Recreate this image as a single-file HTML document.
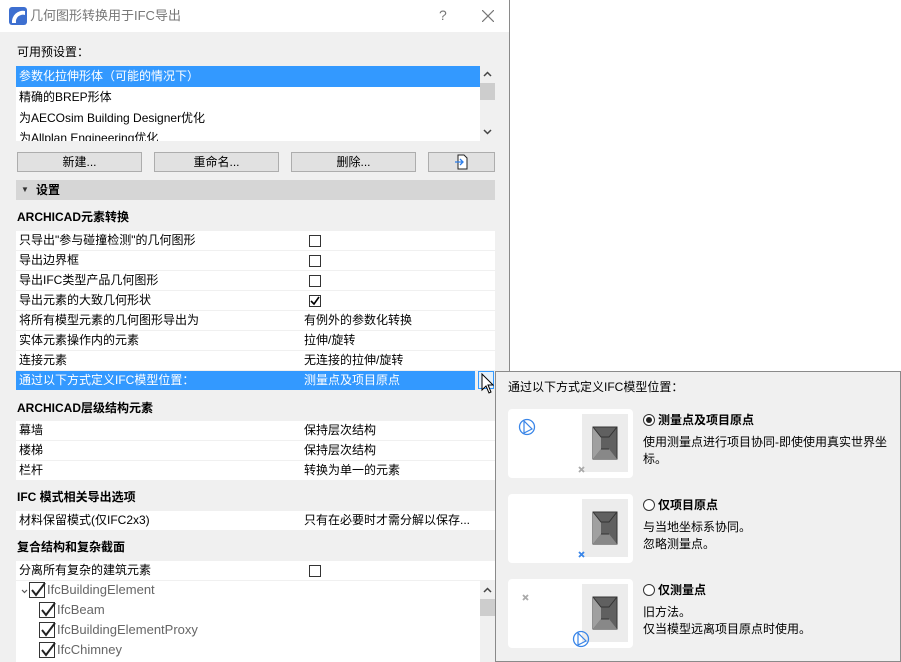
<!DOCTYPE html>
<html><head><meta charset="utf-8"><style>
*{margin:0;padding:0;box-sizing:border-box}
body{width:901px;height:662px;background:#fff;position:relative;overflow:hidden;font-family:"Liberation Sans","Noto Sans CJK SC",sans-serif;font-size:12px;color:#000}
.a{position:absolute;white-space:nowrap;line-height:20px}
.dlg{position:absolute;left:0;top:0;width:510px;height:662px;background:#f0f0f0;border-right:1px solid #8a8a8a}
.tb{position:absolute;left:0;top:0;width:509px;height:32px;background:#fff}
.btn{position:absolute;top:152px;height:20px;background:#e1e1e1;border:1px solid #adadad;text-align:center;line-height:18px}
.row{position:absolute;left:16px;width:479px;height:19px;background:#fff}
.row span{position:absolute;top:0;line-height:19px}
.cb{position:absolute;left:293px;top:4px;width:12px;height:12px;border:1px solid #333;background:#fff}
.h{font-weight:bold}
.card{position:absolute;left:508px;width:125px;height:69px;background:#fff;border-radius:4px}
.card .g{position:absolute;left:74px;top:5px;width:46px;height:58px;background:#ececec}
.rad{display:inline-block;width:12px;height:12px;border:1px solid #333;border-radius:50%;vertical-align:-2px;margin-right:3px;position:relative;background:#fff}
.tcb{position:absolute;width:16px;height:16px;border:1px solid #333;background:#fff}
</style></head><body>
<div class="dlg">
<div class="tb">
<svg style="position:absolute;left:9px;top:7px" width="18" height="18"><rect x="0" y="0" width="18" height="18" rx="3" fill="#3d6fd0"/><path d="M3 16 A11 11 0 0 1 16 4 L16 8 A7 7 0 0 0 7 16 Z" fill="#fff"/></svg>
<div class="a" style="left:30px;top:6px;color:#777;font-size:13px">几何图形转换用于IFC导出</div>
<div class="a" style="left:439px;top:5px;color:#777;font-size:14px">?</div>
<svg style="position:absolute;left:482px;top:10px" width="12" height="12"><path d="M0 0L12 12M12 0L0 12" stroke="#777" stroke-width="1.2"/></svg>
</div>
<div class="a" style="left:17px;top:42px">可用预设置：</div>
<div style="position:absolute;left:16px;top:66px;width:479px;height:75px;background:#fff;overflow:hidden">
<div style="position:absolute;left:0;top:0;width:464px;height:21px;background:#3399ff"></div>
<div class="a" style="left:3px;top:0;color:#fff">参数化拉伸形体（可能的情况下）</div>
<div class="a" style="left:3px;top:21px">精确的BREP形体</div>
<div class="a" style="left:3px;top:42px">为AECOsim Building Designer优化</div>
<div class="a" style="left:3px;top:62px">为Allplan Engineering优化</div>
<div style="position:absolute;left:464px;top:0;width:15px;height:75px;background:#f0f0f0"></div>
<div style="position:absolute;left:464px;top:17px;width:15px;height:17px;background:#cdcdcd"></div>
<svg style="position:absolute;left:467px;top:5px" width="9" height="6"><path d="M1 5L4.5 1.5L8 5" stroke="#444" stroke-width="1.5" fill="none"/></svg>
<svg style="position:absolute;left:467px;top:63px" width="9" height="6"><path d="M1 1L4.5 4.5L8 1" stroke="#444" stroke-width="1.5" fill="none"/></svg>
</div>
<div class="btn" style="left:17px;width:125px">新建...</div>
<div class="btn" style="left:154px;width:125px">重命名...</div>
<div class="btn" style="left:291px;width:125px">删除...</div>
<div class="btn" style="left:428px;width:67px"><svg width="16" height="16" style="margin-top:1px"><path d="M4 1H10L13 4V15H4Z" fill="#fff" stroke="#222"/><path d="M1 8H9M6 5L9 8L6 11" stroke="#2b7de9" fill="none" stroke-width="1.3"/></svg></div>
<div style="position:absolute;left:16px;top:180px;width:479px;height:20px;background:#d6d6d6"></div>
<div class="a h" style="left:21px;top:180px;font-size:8px;color:#333">▼</div>
<div class="a h" style="left:36px;top:180px">设置</div>
<div class="a h" style="left:17px;top:207px">ARCHICAD元素转换</div>
<div class="row" style="top:231px"><span style="left:3px">只导出"参与碰撞检测"的几何图形</span><div class="cb"></div></div>
<div class="row" style="top:251px"><span style="left:3px">导出边界框</span><div class="cb"></div></div>
<div class="row" style="top:271px"><span style="left:3px">导出IFC类型产品几何图形</span><div class="cb"></div></div>
<div class="row" style="top:291px"><span style="left:3px">导出元素的大致几何形状</span><div class="cb"><svg width="10" height="10" style="position:absolute;left:0;top:0"><path d="M1 5L4 8L9 1" stroke="#000" stroke-width="1.6" fill="none"/></svg></div></div>
<div class="row" style="top:311px"><span style="left:3px">将所有模型元素的几何图形导出为</span><span style="left:288px">有例外的参数化转换</span></div>
<div class="row" style="top:331px"><span style="left:3px">实体元素操作内的元素</span><span style="left:288px">拉伸/旋转</span></div>
<div class="row" style="top:351px"><span style="left:3px">连接元素</span><span style="left:288px">无连接的拉伸/旋转</span></div>
<div class="row" style="top:371px;width:459px;background:#3399ff;color:#fff"><span style="left:3px">通过以下方式定义IFC模型位置：</span><span style="left:288px">测量点及项目原点</span></div>
<div style="position:absolute;left:478px;top:371px;width:16px;height:18px;border:1px solid #3399ff;background:#e5f1fb"></div>
<svg style="position:absolute;left:480px;top:373px" width="14" height="26"><path d="M2 1L2 17L6 13L9 20L11 19L8 12L13 12Z" fill="#fff" stroke="#000" stroke-width="1"/></svg>
<div class="a h" style="left:17px;top:398px">ARCHICAD层级结构元素</div>
<div class="row" style="top:421px"><span style="left:3px">幕墙</span><span style="left:288px">保持层次结构</span></div>
<div class="row" style="top:441px"><span style="left:3px">楼梯</span><span style="left:288px">保持层次结构</span></div>
<div class="row" style="top:461px"><span style="left:3px">栏杆</span><span style="left:288px">转换为单一的元素</span></div>
<div class="a h" style="left:17px;top:487px">IFC 模式相关导出选项</div>
<div class="row" style="top:511px"><span style="left:3px">材料保留模式(仅IFC2x3)</span><span style="left:288px">只有在必要时才需分解以保存...</span></div>
<div class="a h" style="left:17px;top:537px">复合结构和复杂截面</div>
<div class="row" style="top:561px"><span style="left:3px">分离所有复杂的建筑元素</span><div class="cb"></div></div>
<div style="position:absolute;left:16px;top:581px;width:479px;height:81px;background:#fff">
<div style="position:absolute;left:464px;top:0;width:15px;height:81px;background:#f0f0f0"></div>
<div style="position:absolute;left:464px;top:18px;width:15px;height:17px;background:#cdcdcd"></div>
<svg style="position:absolute;left:467px;top:6px" width="9" height="6"><path d="M1 5L4.5 1.5L8 5" stroke="#444" stroke-width="1.5" fill="none"/></svg>
<svg style="position:absolute;left:5px;top:8px" width="7" height="5"><path d="M1 1L3.5 3.5L6 1" stroke="#555" stroke-width="1.2" fill="none"/></svg>
</div>
<div class="tcb" style="left:29px;top:582px"></div><div class="a" style="left:47px;top:580px;color:#666;font-size:13px">IfcBuildingElement</div>
<div class="tcb" style="left:39px;top:602px"></div><div class="a" style="left:57px;top:600px;color:#666;font-size:13px">IfcBeam</div>
<div class="tcb" style="left:39px;top:622px"></div><div class="a" style="left:57px;top:620px;color:#666;font-size:13px">IfcBuildingElementProxy</div>
<div class="tcb" style="left:39px;top:642px"></div><div class="a" style="left:57px;top:640px;color:#666;font-size:13px">IfcChimney</div>
<svg style="position:absolute;left:29px;top:580px" width="30" height="82"><g stroke="#222" stroke-width="2" fill="none"><path d="M3 10L7 15L16 3"/><path d="M13 30L17 35L26 23"/><path d="M13 50L17 55L26 43"/><path d="M13 70L17 75L26 63"/></g></svg>
</div>
<!-- popup -->
<div style="position:absolute;left:495px;top:371px;width:406px;height:291px;background:#f0f0f0;border:1px solid #8a8a8a"></div>
<div class="a" style="left:508px;top:377px">通过以下方式定义IFC模型位置：</div>
<div class="card" style="top:409px"><div class="g"></div></div>
<div class="card" style="top:494px"><div class="g"></div></div>
<div class="card" style="top:579px"><div class="g"></div></div>
<svg style="position:absolute;left:590px;top:426px" width="30" height="220">
<g id="b"><rect x="3" y="1" width="24" height="32" fill="#606060" stroke="#333"/><path d="M3 1L11 11L11 23L3 33Z" fill="#a0a0a0"/><path d="M11 23L19 23L27 33L3 33Z" fill="#888"/><path d="M3 1L11 11H19L27 1" stroke="#333" fill="none"/><path d="M11 23H19" stroke="#333"/></g>
<use href="#b" y="85"/><use href="#b" y="170"/>
</svg>
<svg style="position:absolute;left:518px;top:418px" width="20" height="20"><circle cx="9" cy="9" r="7.5" fill="none" stroke="#3a86e8" stroke-width="1.3"/><path d="M6 3L6 15L14 11Z" fill="none" stroke="#3a86e8" stroke-width="1.2"/></svg>
<svg style="position:absolute;left:572px;top:630px" width="20" height="20"><circle cx="9" cy="9" r="7.5" fill="none" stroke="#3a86e8" stroke-width="1.3"/><path d="M6 3L6 15L14 11Z" fill="none" stroke="#3a86e8" stroke-width="1.2"/></svg>
<svg style="position:absolute;left:578px;top:466px" width="7" height="7"><path d="M1 1L6 6M6 1L1 6" stroke="#aaa" stroke-width="1.8"/></svg>
<svg style="position:absolute;left:578px;top:551px" width="7" height="7"><path d="M1 1L6 6M6 1L1 6" stroke="#3a86e8" stroke-width="1.8"/></svg>
<svg style="position:absolute;left:522px;top:594px" width="7" height="7"><path d="M1 1L6 6M6 1L1 6" stroke="#aaa" stroke-width="1.8"/></svg>
<div class="a h" style="left:643px;top:410px"><span class="rad"><span style="position:absolute;left:2px;top:2px;width:6px;height:6px;border-radius:50%;background:#222"></span></span>测量点及项目原点</div>
<div class="a" style="left:643px;top:434px;line-height:17px">使用测量点进行项目协同-即使使用真实世界坐<br>标。</div>
<div class="a h" style="left:643px;top:495px"><span class="rad"></span>仅项目原点</div>
<div class="a" style="left:643px;top:519px;line-height:17px">与当地坐标系协同。<br>忽略测量点。</div>
<div class="a h" style="left:643px;top:580px"><span class="rad"></span>仅测量点</div>
<div class="a" style="left:643px;top:604px;line-height:17px">旧方法。<br>仅当模型远离项目原点时使用。</div>
</body></html>
